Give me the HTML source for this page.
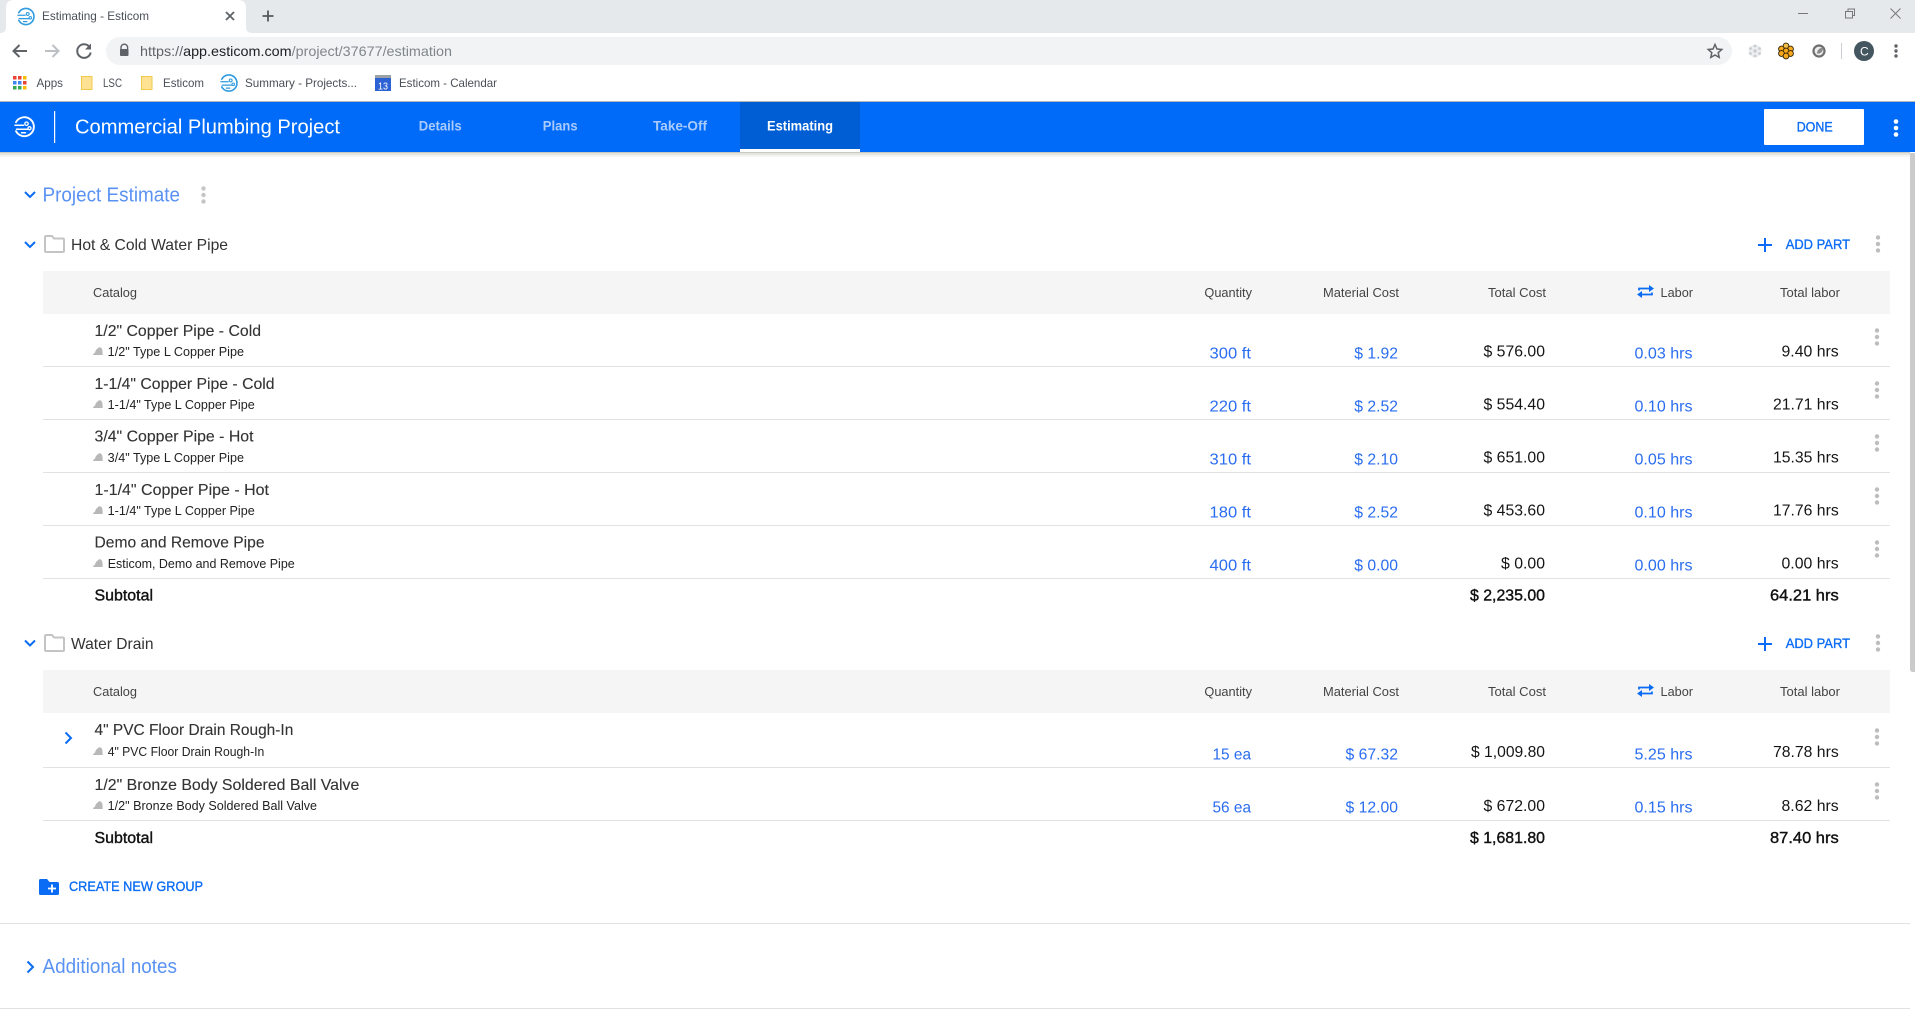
<!DOCTYPE html>
<html>
<head>
<meta charset="utf-8">
<title>Estimating - Esticom</title>
<style>
html,body{margin:0;padding:0;background:#fff;width:1915px;height:1036px;overflow:hidden}
svg{display:block}
text{font-family:"Liberation Sans",sans-serif;white-space:pre}
.t{font-size:16px;fill:#333;stroke:#333;stroke-width:.12px}
.s{font-size:12.5px;fill:#222}
.h{font-size:12.5px;fill:#444}
.b{font-size:16px;fill:#2a6df0}
.k{font-size:16px;fill:#151515}
.m{font-size:16px;fill:#111;stroke:#111;stroke-width:.4px}
.g{font-size:16px;fill:#333}
.a{font-size:14px;fill:#0a6cf5;stroke:#0a6cf5;stroke-width:.35px}
.c{font-size:12px;fill:#4a4f57}
.n{font-size:14px;font-weight:bold;fill:#fff}
.lk{font-size:20px;fill:#5a92f3}
</style>
</head>
<body>
<svg width="1915" height="1036" viewBox="0 0 1915 1036" xmlns="http://www.w3.org/2000/svg">
<defs>
<g id="keb"><circle cx="0" cy="-6.500" r="2.200"/><circle cx="0" cy="0" r="2.200"/><circle cx="0" cy="6.500" r="2.200"/></g>
<g id="pt"><path d="M-9 0c.3-1.500 1.200-2 2-2.200.3-2 1.200-3.500 2.600-4.200.7-1.500 2.500-1.800 3.600-.8 1 .9 1.400 2.800 1.400 4.800v2.400z" fill="#b8b8b8"/></g>
<g id="fld"><path d="M1 16V2.200Q1 1 2.200 1H8l2 2.500h8.800Q20 3.500 20 4.700V16Q20 17 18.800 17H2.200Q1 17 1 16Z" fill="#fff" stroke="#c4c4c4" stroke-width="2"/></g>
<g id="logo" fill="none" stroke-linecap="round"><path d="M-8.500 -4.500A9.500 9.500 0 1 1 -8.500 4.500" stroke-width="1.900"/><path d="M-9.500 -1.500H-1M-8 2.500H3M-3 6H1" stroke-width="1.500"/><circle cx="2" cy="-3" r="1.700" stroke-width="1.300"/><circle cx="5" cy="1.500" r="1.500" stroke-width="1.300"/></g>
<g id="swap" fill="none" stroke="#0a6cf5" stroke-width="1.700"><path d="M2 5.500V3.500H13"/><path d="M12 0L17 3.500L12 7" fill="#0a6cf5" stroke="none"/><path d="M15 7.500V9.500H4"/><path d="M5 6L0 9.500L5 13" fill="#0a6cf5" stroke="none"/></g>
</defs>

<!-- browser chrome -->
<rect x="0" y="0" width="1915" height="33" fill="#e6e9ec"/>
<path d="M0 33Q6 33 6 27V8Q6 0 14 0H238Q246 0 246 8V27Q246 33 252 33Z" fill="#fff"/>
<use href="#logo" transform="translate(26,16.500) scale(.85)" style="stroke:#2f9be0"/>
<text x="42" y="20" class="c" textLength="107" lengthAdjust="spacingAndGlyphs">Estimating - Esticom</text>
<path d="M226 12L234 20M234 12L226 20" stroke="#5f6368" stroke-width="1.800" fill="none"/>
<path d="M268 10.500V21.500M262.500 16H273.500" stroke="#55595e" stroke-width="1.800" fill="none"/>
<path d="M1798 13.500H1808" stroke="#777" stroke-width="1" fill="none"/>
<path d="M1845.500 11.500h7v6.500h-7zM1848 11.500V9h6.500v6.500h-2" stroke="#777" stroke-width="1" fill="none"/>
<path d="M1890.500 8.500L1900.500 18.500M1900.500 8.500L1890.500 18.500" stroke="#777" stroke-width="1" fill="none"/>

<rect x="0" y="33" width="1915" height="68" fill="#fff"/>
<path d="M27 51H14M19.500 45L13.500 51L19.500 57" stroke="#5f6368" stroke-width="2" fill="none"/>
<path d="M45 51H58M52.500 45L58.500 51L52.500 57" stroke="#bcc0c4" stroke-width="2" fill="none"/>
<path d="M89.500 47A6.800 6.800 0 1 0 90.700 52.500" stroke="#5f6368" stroke-width="2" fill="none"/><path d="M91 43.500V49.500H85Z" fill="#5f6368"/>
<rect x="106" y="37" width="1626" height="28" rx="14" fill="#f1f3f4"/>
<path d="M121 49.500V47.500a3.300 3.300 0 0 1 6.600 0V49.500" fill="none" stroke="#5f6368" stroke-width="1.400"/><rect x="120" y="49" width="8.500" height="7" rx="1" fill="#5f6368"/>
<text x="140" y="56" font-size="14" textLength="312" lengthAdjust="spacingAndGlyphs" fill="#80868b"><tspan fill="#5f6368">https://</tspan><tspan fill="#202124">app.esticom.com</tspan>/project/37677/estimation</text>
<path d="M1715 44.500l2 4.500 4.800.5-3.600 3.200 1 4.700-4.200-2.400-4.200 2.400 1-4.700-3.600-3.200 4.800-.5z" fill="none" stroke="#5f6368" stroke-width="1.500"/>
<g fill="#c9ccd0"><circle cx="1755" cy="51" r="6.500" fill="#eceef0"/><circle cx="1755" cy="51" r="1.700"/><circle cx="1755" cy="46" r="1.400"/><circle cx="1755" cy="56" r="1.400"/><circle cx="1750.500" cy="48.500" r="1.400"/><circle cx="1759.500" cy="48.500" r="1.400"/><circle cx="1750.500" cy="53.500" r="1.400"/><circle cx="1759.500" cy="53.500" r="1.400"/></g>
<g stroke="#2a1e06" stroke-width=".9" fill="#f7a81b"><circle cx="1786" cy="46" r="2.900" fill="#f5c04a"/><circle cx="1781.500" cy="49" r="2.900"/><circle cx="1790.500" cy="49" r="2.900"/><circle cx="1786" cy="51" r="2.900"/><circle cx="1781.500" cy="53.500" r="2.900"/><circle cx="1790.500" cy="53.500" r="2.900"/><circle cx="1786" cy="56" r="2.900"/></g>
<circle cx="1819" cy="51" r="5.500" fill="#eee" stroke="#6f6f6f" stroke-width="2.200"/><path d="M1817 53.500a5 5 0 0 0 6-5c-2-1.500-6 1-6 5z" fill="#8a8a8a"/>
<rect x="1841" y="43" width="1" height="16" fill="#c9ccd0"/>
<circle cx="1864" cy="51" r="10" fill="#44565f"/><text x="1860" y="55.500" font-size="12" fill="#fff">C</text>
<g fill="#5f6368"><circle cx="1896" cy="46" r="1.700"/><circle cx="1896" cy="51" r="1.700"/><circle cx="1896" cy="56" r="1.700"/></g>

<!-- bookmarks -->
<g><rect x="13" y="76" width="3.500" height="3.500" fill="#ea4335"/><rect x="13" y="81" width="3.500" height="3.500" fill="#4285f4"/><rect x="13" y="86" width="3.500" height="3.500" fill="#34a853"/><rect x="18" y="76" width="3.500" height="3.500" fill="#ea4335"/><rect x="18" y="81" width="3.500" height="3.500" fill="#4285f4"/><rect x="18" y="86" width="3.500" height="3.500" fill="#34a853"/><rect x="23" y="76" width="3.500" height="3.500" fill="#fbbc05"/><rect x="23" y="81" width="3.500" height="3.500" fill="#ea4335"/><rect x="23" y="86" width="3.500" height="3.500" fill="#fbbc05"/></g>
<text x="36.500" y="87.200" class="c" textLength="26.500" lengthAdjust="spacingAndGlyphs">Apps</text>
<rect x="81.500" y="76.500" width="10.500" height="13" fill="#fde293" stroke="#f1c94e"/>
<text x="103" y="87.200" class="c" textLength="19" lengthAdjust="spacingAndGlyphs">LSC</text>
<rect x="141.500" y="76.500" width="10.500" height="13" fill="#fde293" stroke="#f1c94e"/>
<text x="163" y="87.200" class="c" textLength="41" lengthAdjust="spacingAndGlyphs">Esticom</text>
<use href="#logo" transform="translate(229,83) scale(.85)" style="stroke:#2f9be0"/>
<text x="245" y="87.200" class="c" textLength="112" lengthAdjust="spacingAndGlyphs">Summary - Projects...</text>
<rect x="375" y="75" width="16" height="3" fill="#9aa0a6"/><rect x="375" y="78" width="16" height="13" fill="#2c62d3"/><text x="378" y="89.500" font-size="10.500" fill="#fff" textLength="10" lengthAdjust="spacingAndGlyphs">13</text>
<text x="399" y="87.200" class="c" textLength="98" lengthAdjust="spacingAndGlyphs">Esticom - Calendar</text>
<rect x="0" y="101" width="1915" height="1" fill="#b4b6b8"/>

<!-- app header -->
<rect x="0" y="152" width="1910" height="1" fill="#c9c9c2"/>
<rect x="0" y="153" width="1910" height="2" fill="#e4e4e0"/>
<rect x="0" y="155" width="1910" height="2" fill="#f5f5f3"/>
<rect x="0" y="102" width="1915" height="50" fill="#006bf8"/>
<rect x="740" y="102" width="120" height="50" fill="#005ed5"/>
<rect x="740" y="149" width="120" height="3" fill="#fff"/>
<use href="#logo" transform="translate(24.500,126.700)" style="stroke:#fff"/>
<rect x="54" y="111" width="1.200" height="32" fill="#fff"/>
<text x="75" y="133.500" font-size="20.500" fill="#fff" textLength="265" lengthAdjust="spacingAndGlyphs">Commercial Plumbing Project</text>
<text x="418.800" y="130.700" class="n" textLength="42.800" lengthAdjust="spacingAndGlyphs" style="fill:#a9cbfd">Details</text>
<text x="542.800" y="130.700" class="n" textLength="34.800" lengthAdjust="spacingAndGlyphs" style="fill:#a9cbfd">Plans</text>
<text x="653" y="130.700" class="n" textLength="54" lengthAdjust="spacingAndGlyphs" style="fill:#a9cbfd">Take-Off</text>
<text x="767" y="130.700" class="n" textLength="66" lengthAdjust="spacingAndGlyphs">Estimating</text>
<rect x="1764" y="109" width="100" height="36" rx="1" fill="#fff"/>
<text x="1796.700" y="131.700" font-size="14" fill="#0a6cf5" stroke="#0a6cf5" stroke-width=".35" textLength="36" lengthAdjust="spacingAndGlyphs">DONE</text>
<g fill="#fff" transform="translate(1896,128)"><circle cy="-6.500" r="2.300"/><circle cy="0" r="2.300"/><circle cy="6.500" r="2.300"/></g>

<!-- scrollbar -->
<path d="M1910 153H1915V672H1913Q1910 672 1910 669Z" fill="#cbcbcb"/>

<!-- Project Estimate -->
<path d="M25 192L30 197L35 192" fill="none" stroke="#0a6cf5" stroke-width="2"/>
<text x="42.500" y="201.500" class="lk" textLength="137.500" lengthAdjust="spacingAndGlyphs">Project Estimate</text>
<use href="#keb" transform="translate(203.500,195)" fill="#c5c5c5"/>

<!-- Group 1 -->
<path d="M25 242L30 247L35 242" fill="none" stroke="#0a6cf5" stroke-width="2"/>
<use href="#fld" transform="translate(44,235)"/>
<text x="71" y="250" class="g" textLength="157" lengthAdjust="spacingAndGlyphs">Hot &amp; Cold Water Pipe</text>
<path d="M1765 238V252M1758 245H1772" stroke="#0a6cf5" stroke-width="2" fill="none"/>
<text x="1785.700" y="248.800" class="a" textLength="64.300" lengthAdjust="spacingAndGlyphs">ADD PART</text>
<use href="#keb" transform="translate(1878,244)" fill="#bdbdbd"/>

<rect x="43" y="271" width="1847" height="43" fill="#f5f5f5"/>
<text x="93" y="297" class="h" textLength="44" lengthAdjust="spacingAndGlyphs">Catalog</text>
<text x="1204.400" y="297" class="h" textLength="47.600" lengthAdjust="spacingAndGlyphs">Quantity</text>
<text x="1323" y="297" class="h" textLength="76" lengthAdjust="spacingAndGlyphs">Material Cost</text>
<text x="1488" y="297" class="h" textLength="58" lengthAdjust="spacingAndGlyphs">Total Cost</text>
<use href="#swap" transform="translate(1637,285)"/>
<text x="1660.500" y="297" class="h" textLength="32.500" lengthAdjust="spacingAndGlyphs">Labor</text>
<text x="1780" y="297" class="h" textLength="60" lengthAdjust="spacingAndGlyphs">Total labor</text>

<g transform="translate(0,366)">
<rect x="43" y="0" width="1847" height="1" fill="#e2e2e2"/>
<text x="94.500" y="-30" class="t" textLength="166.500" lengthAdjust="spacingAndGlyphs">1/2" Copper Pipe - Cold</text>
<use href="#pt" transform="translate(102,-11)"/>
<text x="107.700" y="-10" class="s" textLength="136.300" lengthAdjust="spacingAndGlyphs">1/2" Type L Copper Pipe</text>
<text x="1209.500" y="-7.500" class="b" textLength="41.500" lengthAdjust="spacingAndGlyphs">300 ft</text>
<text x="1354.300" y="-7.500" class="b" textLength="43.700" lengthAdjust="spacingAndGlyphs">$ 1.92</text>
<text x="1483.500" y="-9.500" class="k" textLength="61.500" lengthAdjust="spacingAndGlyphs">$ 576.00</text>
<text x="1634.500" y="-7.500" class="b" textLength="58" lengthAdjust="spacingAndGlyphs">0.03 hrs</text>
<text x="1781.500" y="-9.500" class="k" textLength="57.200" lengthAdjust="spacingAndGlyphs">9.40 hrs</text>
<use href="#keb" transform="translate(1877,-29)" fill="#bdbdbd"/>
</g>
<g transform="translate(0,419)">
<rect x="43" y="0" width="1847" height="1" fill="#e2e2e2"/>
<text x="94.500" y="-30" class="t" textLength="180" lengthAdjust="spacingAndGlyphs">1-1/4" Copper Pipe - Cold</text>
<use href="#pt" transform="translate(102,-11)"/>
<text x="107.700" y="-10" class="s" textLength="147" lengthAdjust="spacingAndGlyphs">1-1/4" Type L Copper Pipe</text>
<text x="1209.500" y="-7.500" class="b" textLength="41.500" lengthAdjust="spacingAndGlyphs">220 ft</text>
<text x="1354.300" y="-7.500" class="b" textLength="43.700" lengthAdjust="spacingAndGlyphs">$ 2.52</text>
<text x="1483.500" y="-9.500" class="k" textLength="61.500" lengthAdjust="spacingAndGlyphs">$ 554.40</text>
<text x="1634.500" y="-7.500" class="b" textLength="58" lengthAdjust="spacingAndGlyphs">0.10 hrs</text>
<text x="1773" y="-9.500" class="k" textLength="65.700" lengthAdjust="spacingAndGlyphs">21.71 hrs</text>
<use href="#keb" transform="translate(1877,-29)" fill="#bdbdbd"/>
</g>
<g transform="translate(0,472)">
<rect x="43" y="0" width="1847" height="1" fill="#e2e2e2"/>
<text x="94.500" y="-30.500" class="t" textLength="159" lengthAdjust="spacingAndGlyphs">3/4" Copper Pipe - Hot</text>
<use href="#pt" transform="translate(102,-11)"/>
<text x="107.700" y="-10" class="s" textLength="136.300" lengthAdjust="spacingAndGlyphs">3/4" Type L Copper Pipe</text>
<text x="1209.500" y="-7.500" class="b" textLength="41.500" lengthAdjust="spacingAndGlyphs">310 ft</text>
<text x="1354.300" y="-7.500" class="b" textLength="43.700" lengthAdjust="spacingAndGlyphs">$ 2.10</text>
<text x="1483.500" y="-9.500" class="k" textLength="61.500" lengthAdjust="spacingAndGlyphs">$ 651.00</text>
<text x="1634.500" y="-7.500" class="b" textLength="58" lengthAdjust="spacingAndGlyphs">0.05 hrs</text>
<text x="1773" y="-9.500" class="k" textLength="65.700" lengthAdjust="spacingAndGlyphs">15.35 hrs</text>
<use href="#keb" transform="translate(1877,-29)" fill="#bdbdbd"/>
</g>
<g transform="translate(0,525)">
<rect x="43" y="0" width="1847" height="1" fill="#e2e2e2"/>
<text x="94.500" y="-30" class="t" textLength="174.500" lengthAdjust="spacingAndGlyphs">1-1/4" Copper Pipe - Hot</text>
<use href="#pt" transform="translate(102,-11)"/>
<text x="107.700" y="-10" class="s" textLength="147" lengthAdjust="spacingAndGlyphs">1-1/4" Type L Copper Pipe</text>
<text x="1209.500" y="-7.500" class="b" textLength="41.500" lengthAdjust="spacingAndGlyphs">180 ft</text>
<text x="1354.300" y="-7.500" class="b" textLength="43.700" lengthAdjust="spacingAndGlyphs">$ 2.52</text>
<text x="1483.500" y="-9.500" class="k" textLength="61.500" lengthAdjust="spacingAndGlyphs">$ 453.60</text>
<text x="1634.500" y="-7.500" class="b" textLength="58" lengthAdjust="spacingAndGlyphs">0.10 hrs</text>
<text x="1773" y="-9.500" class="k" textLength="65.700" lengthAdjust="spacingAndGlyphs">17.76 hrs</text>
<use href="#keb" transform="translate(1877,-29)" fill="#bdbdbd"/>
</g>
<g transform="translate(0,578)">
<rect x="43" y="0" width="1847" height="1" fill="#e2e2e2"/>
<text x="94.500" y="-30.500" class="t" textLength="170" lengthAdjust="spacingAndGlyphs">Demo and Remove Pipe</text>
<use href="#pt" transform="translate(102,-11)"/>
<text x="107.700" y="-10" class="s" textLength="187" lengthAdjust="spacingAndGlyphs">Esticom, Demo and Remove Pipe</text>
<text x="1209.500" y="-7.500" class="b" textLength="41.500" lengthAdjust="spacingAndGlyphs">400 ft</text>
<text x="1354.300" y="-7.500" class="b" textLength="43.700" lengthAdjust="spacingAndGlyphs">$ 0.00</text>
<text x="1501" y="-9.500" class="k" textLength="44" lengthAdjust="spacingAndGlyphs">$ 0.00</text>
<text x="1634.500" y="-7.500" class="b" textLength="58" lengthAdjust="spacingAndGlyphs">0.00 hrs</text>
<text x="1781.500" y="-9.500" class="k" textLength="57.200" lengthAdjust="spacingAndGlyphs">0.00 hrs</text>
<use href="#keb" transform="translate(1877,-29)" fill="#bdbdbd"/>
</g>
<text x="94.500" y="600.500" class="m" textLength="58.500" lengthAdjust="spacingAndGlyphs">Subtotal</text>
<text x="1470" y="600.500" class="m" textLength="75" lengthAdjust="spacingAndGlyphs">$ 2,235.00</text>
<text x="1770" y="600.500" class="m" textLength="68.700" lengthAdjust="spacingAndGlyphs">64.21 hrs</text>

<!-- Group 2 -->
<path d="M25 640.500L30 645.500L35 640.500" fill="none" stroke="#0a6cf5" stroke-width="2"/>
<use href="#fld" transform="translate(44,634)"/>
<text x="71" y="648.800" class="g" textLength="82.500" lengthAdjust="spacingAndGlyphs">Water Drain</text>
<path d="M1765 637V651M1758 644H1772" stroke="#0a6cf5" stroke-width="2" fill="none"/>
<text x="1785.700" y="647.800" class="a" textLength="64.300" lengthAdjust="spacingAndGlyphs">ADD PART</text>
<use href="#keb" transform="translate(1878,643)" fill="#bdbdbd"/>

<rect x="43" y="670" width="1847" height="43" fill="#f5f5f5"/>
<text x="93" y="696" class="h" textLength="44" lengthAdjust="spacingAndGlyphs">Catalog</text>
<text x="1204.400" y="696" class="h" textLength="47.600" lengthAdjust="spacingAndGlyphs">Quantity</text>
<text x="1323" y="696" class="h" textLength="76" lengthAdjust="spacingAndGlyphs">Material Cost</text>
<text x="1488" y="696" class="h" textLength="58" lengthAdjust="spacingAndGlyphs">Total Cost</text>
<use href="#swap" transform="translate(1637,684)"/>
<text x="1660.500" y="696" class="h" textLength="32.500" lengthAdjust="spacingAndGlyphs">Labor</text>
<text x="1780" y="696" class="h" textLength="60" lengthAdjust="spacingAndGlyphs">Total labor</text>

<g transform="translate(0,767)">
<rect x="43" y="0" width="1847" height="1" fill="#e2e2e2"/>
<path d="M65.500 -34.500L71 -29L65.500 -23.500" fill="none" stroke="#0a6cf5" stroke-width="2"/>
<text x="94.500" y="-32" class="t" textLength="198.800" lengthAdjust="spacingAndGlyphs">4" PVC Floor Drain Rough-In</text>
<use href="#pt" transform="translate(102,-12)"/>
<text x="107.700" y="-11" class="s" textLength="156.600" lengthAdjust="spacingAndGlyphs">4" PVC Floor Drain Rough-In</text>
<text x="1212.500" y="-7.300" class="b" textLength="38.500" lengthAdjust="spacingAndGlyphs">15 ea</text>
<text x="1345.500" y="-7.300" class="b" textLength="52.500" lengthAdjust="spacingAndGlyphs">$ 67.32</text>
<text x="1471" y="-10" class="k" textLength="74" lengthAdjust="spacingAndGlyphs">$ 1,009.80</text>
<text x="1634.500" y="-7.300" class="b" textLength="58" lengthAdjust="spacingAndGlyphs">5.25 hrs</text>
<text x="1773" y="-10" class="k" textLength="65.700" lengthAdjust="spacingAndGlyphs">78.78 hrs</text>
<use href="#keb" transform="translate(1877,-30)" fill="#bdbdbd"/>
</g>
<g transform="translate(0,820)">
<rect x="43" y="0" width="1847" height="1" fill="#e2e2e2"/>
<text x="94.500" y="-30" class="t" textLength="264.800" lengthAdjust="spacingAndGlyphs">1/2" Bronze Body Soldered Ball Valve</text>
<use href="#pt" transform="translate(102,-11)"/>
<text x="107.700" y="-10" class="s" textLength="209.300" lengthAdjust="spacingAndGlyphs">1/2" Bronze Body Soldered Ball Valve</text>
<text x="1212.500" y="-7.300" class="b" textLength="38.500" lengthAdjust="spacingAndGlyphs">56 ea</text>
<text x="1345.500" y="-7.300" class="b" textLength="52.500" lengthAdjust="spacingAndGlyphs">$ 12.00</text>
<text x="1483.500" y="-9" class="k" textLength="61.500" lengthAdjust="spacingAndGlyphs">$ 672.00</text>
<text x="1634.500" y="-7.300" class="b" textLength="58" lengthAdjust="spacingAndGlyphs">0.15 hrs</text>
<text x="1781.500" y="-9" class="k" textLength="57.200" lengthAdjust="spacingAndGlyphs">8.62 hrs</text>
<use href="#keb" transform="translate(1877,-29)" fill="#bdbdbd"/>
</g>
<text x="94.500" y="843" class="m" textLength="58.500" lengthAdjust="spacingAndGlyphs">Subtotal</text>
<text x="1470" y="843" class="m" textLength="75" lengthAdjust="spacingAndGlyphs">$ 1,681.80</text>
<text x="1770" y="843" class="m" textLength="68.700" lengthAdjust="spacingAndGlyphs">87.40 hrs</text>

<!-- Create new group -->
<path d="M39 880.500Q39 879 40.500 879H47L49.500 882H57.500Q59 882 59 883.500V893.500Q59 895 57.500 895H40.500Q39 895 39 893.500Z" fill="#0a6cf5"/>
<path d="M52 884.500V892.500M48 888.500H56" stroke="#fff" stroke-width="1.800" fill="none"/>
<text x="69" y="891" class="a" textLength="134" lengthAdjust="spacingAndGlyphs">CREATE NEW GROUP</text>

<rect x="0" y="923" width="1910" height="1" fill="#e2e2e2"/>
<path d="M27.500 961.500L33 967L27.500 972.500" fill="none" stroke="#0a6cf5" stroke-width="2"/>
<text x="42.500" y="973" class="lk" textLength="134.500" lengthAdjust="spacingAndGlyphs">Additional notes</text>
<rect x="0" y="1008" width="1910" height="1" fill="#e2e2e2"/>
</svg>
</body>
</html>
